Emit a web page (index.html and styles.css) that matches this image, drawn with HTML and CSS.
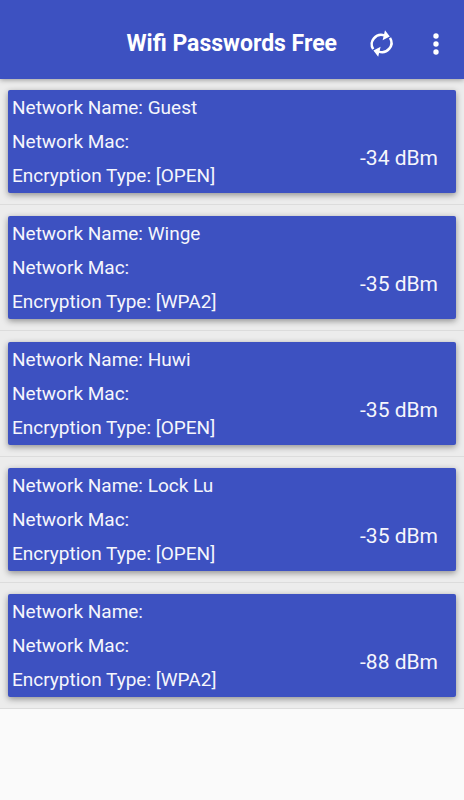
FILE: index.html
```html
<!DOCTYPE html>
<html lang="en">
<head>
<meta charset="utf-8">
<meta name="viewport" content="width=device-width, initial-scale=1">
<title>Wifi Passwords Free</title>
<link rel="stylesheet" href="styles.css">
</head>
<body>
<header class="bar">
  <h1 class="title">Wifi Passwords Free</h1>
  <button class="action" type="button" aria-label="Refresh">
    <svg width="28" height="28" viewBox="0 0 28 28" aria-hidden="true">
      <g fill="none" stroke="#fff" stroke-width="2.5">
        <path d="M5.2 19.2A9.6 9.4 0 0 1 16.5 5.4"/>
        <path d="M22 7.8A9.6 9.4 0 0 1 10.7 21.6"/>
      </g>
      <path fill="#fff" d="M17 .3L21.8 6.6L14.6 10.2zM10.2 26.7L5.4 20.4L12.6 16.8z"/>
    </svg>
  </button>
  <button class="action more" type="button" aria-label="More options">
    <svg width="6" height="22" viewBox="0 0 6 22" fill="#fff" aria-hidden="true">
      <circle cx="3" cy="3" r="2.7"/><circle cx="3" cy="11" r="2.7"/><circle cx="3" cy="19" r="2.7"/>
    </svg>
  </button>
</header>
<main>
  <ul class="list">
    <li class="row"><article class="card"><div class="info"><p>Network Name: Guest</p><p>Network Mac:</p><p>Encryption Type: [OPEN]</p></div><p class="signal">-34 dBm</p></article></li>
    <li class="row"><article class="card"><div class="info"><p>Network Name: Winge</p><p>Network Mac:</p><p>Encryption Type: [WPA2]</p></div><p class="signal">-35 dBm</p></article></li>
    <li class="row"><article class="card"><div class="info"><p>Network Name: Huwi</p><p>Network Mac:</p><p>Encryption Type: [OPEN]</p></div><p class="signal">-35 dBm</p></article></li>
    <li class="row"><article class="card"><div class="info"><p>Network Name: Lock Lu</p><p>Network Mac:</p><p>Encryption Type: [OPEN]</p></div><p class="signal">-35 dBm</p></article></li>
    <li class="row"><article class="card"><div class="info"><p>Network Name:</p><p>Network Mac:</p><p>Encryption Type: [WPA2]</p></div><p class="signal">-88 dBm</p></article></li>
  </ul>
</main>
</body>
</html>
```
FILE: styles.css
```css
* {
  box-sizing: border-box;
}

body {
  margin: 0;
  background: #fafafa;
  color: #f5f6fc;
  font-family: Roboto, "Liberation Sans", sans-serif;
}

h1, p, ul {
  margin: 0;
  padding: 0;
}

.bar {
  position: relative;
  display: flex;
  align-items: center;
  justify-content: flex-end;
  padding: 17px 8px 8px 16px;
  background: #3d51c1;
  box-shadow: 0 1px 5px rgba(0, 0, 0, 0.35);
}

.title {
  margin-right: 18px;
  color: #fff;
  font-size: 23px;
  line-height: 54px;
  font-weight: 700;
}

.action {
  display: flex;
  align-items: center;
  justify-content: center;
  width: 54px;
  height: 54px;
  padding: 0;
  border: 0;
  background: none;
}

.more {
  width: 40px;
  margin-left: 7px;
}

.list {
  list-style: none;
}

.row {
  padding: 11px 8px;
  background: #ececec;
  border-bottom: 1px solid #dcdcdc;
}

.card {
  display: flex;
  justify-content: space-between;
  align-items: flex-end;
  padding: 1px 18px 0 4px;
  border-radius: 2px;
  background: #3d51c1;
  box-shadow: 0 2px 6px rgba(0, 0, 0, 0.4);
}

.info {
  font-size: 19px;
  line-height: 34px;
}

.signal {
  padding-bottom: 18px;
  font-size: 21px;
  line-height: 34px;
}
```
